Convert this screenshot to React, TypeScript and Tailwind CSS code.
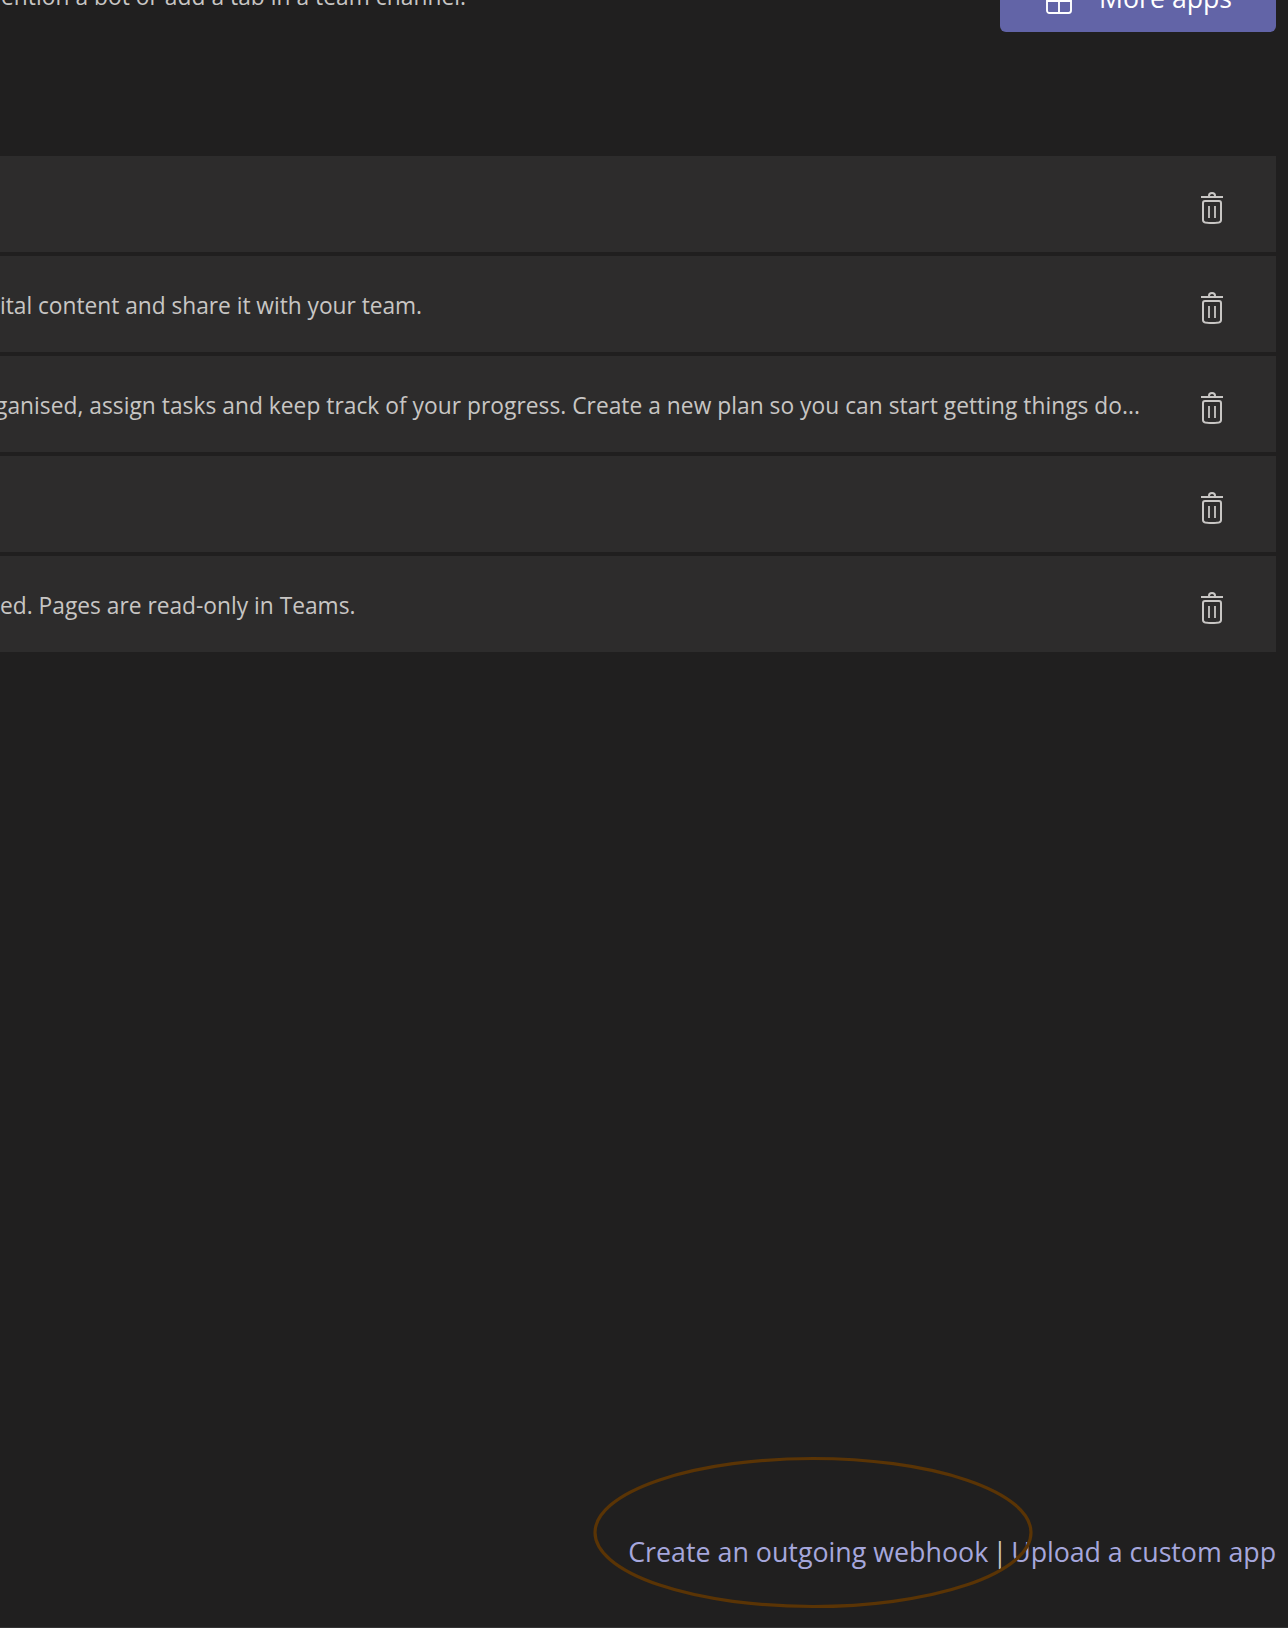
const apps = [
  { id: 1, description: "", textClass: "" },
  {
    id: 2,
    description: "ital content and share it with your team.",
    textClass: "tracking-[-0.03px]",
  },
  {
    id: 3,
    description:
      "ganised, assign tasks and keep track of your progress. Create a new plan so you can start getting things do...",
    textClass: "-ml-[5px] tracking-[0.03px]",
  },
  { id: 4, description: "", textClass: "" },
  { id: 5, description: "ed. Pages are read-only in Teams.", textClass: "" },
];

function TrashIcon() {
  return (
    <svg
      width="22"
      height="32"
      viewBox="0 0 22 32"
      fill="none"
      stroke="currentColor"
      strokeWidth="2"
      aria-hidden="true"
    >
      <path d="M0 5h22" />
      <path d="M8 5V3.7C8 2 9.2 1 11 1s3 1 3 2.7V5" />
      <path d="M4 9h14c1.2 0 2 .8 2 2v17c0 1.5-.7 2.2-2.2 2.5-4.3.7-9.3.7-13.6 0C2.700 30.200 2 29.500 2 28V11c0-1.200.8-2 2-2z" />
      <path d="M9 14v12M15 14v12" transform="translate(-1 0)" strokeWidth="1.8" />
    </svg>
  );
}

function AppsIcon() {
  return (
    <svg
      width="26"
      height="26"
      viewBox="0 0 26 26"
      fill="none"
      stroke="currentColor"
      strokeWidth="1.9"
      aria-hidden="true"
    >
      <rect x="1" y="1" width="24" height="24" rx="2.4" />
      <path d="M13 1v24M1 13h24" />
    </svg>
  );
}

export default function App() {
  return (
    <main className="flex h-[1628px] w-full flex-col overflow-hidden border-b border-[#333333] bg-[#201f1f] pr-3 font-['Open_Sans',sans-serif] text-[22.75px] text-[#c8c6c4]">
      <header className="-mt-8 mb-[124px] flex h-16 shrink-0 items-center justify-between">
        <p className="pb-[7px] pl-px leading-8 tracking-[0.04px] whitespace-nowrap">
          ention a bot or add a tab in a team channel.
        </p>
        <button className="flex h-16 w-[276px] items-center rounded-[6px] bg-[#6264a7] pl-[46px] text-[26.7px] leading-9 text-white">
          <span className="mt-[2px]">
            <AppsIcon />
          </span>
          <span className="ml-[27px] pb-[5px] whitespace-nowrap">More apps</span>
        </button>
      </header>

      <ul className="flex flex-col gap-1">
        {apps.map((app) => (
          <li key={app.id} className="flex h-24 items-center justify-between bg-[#2d2c2c] pr-[53px]">
            <p className={`pt-[4px] leading-8 whitespace-nowrap ${app.textClass}`}>{app.description}</p>
            <button aria-label="Uninstall" className="mt-2">
              <TrashIcon />
            </button>
          </li>
        ))}
      </ul>

      <footer className="mt-auto mb-[57px] flex justify-end text-[26.8px] leading-9 whitespace-nowrap">
        <div className="relative">
          <a className="text-[#a6a7dc]">Create an outgoing webhook</a>
          <svg
            className="absolute -top-[79px] -left-[37px] z-10"
            width="444"
            height="155"
            viewBox="0 0 444 155"
            fill="none"
            aria-hidden="true"
          >
            <ellipse cx="222" cy="77.5" rx="218" ry="74" stroke="#5a3405" strokeWidth="3.2" />
          </svg>
        </div>
        <span className="flex w-[23px] justify-center">|</span>
        <a className="tracking-[-0.07px] text-[#a6a7dc]">Upload a custom app</a>
      </footer>
    </main>
  );
}
